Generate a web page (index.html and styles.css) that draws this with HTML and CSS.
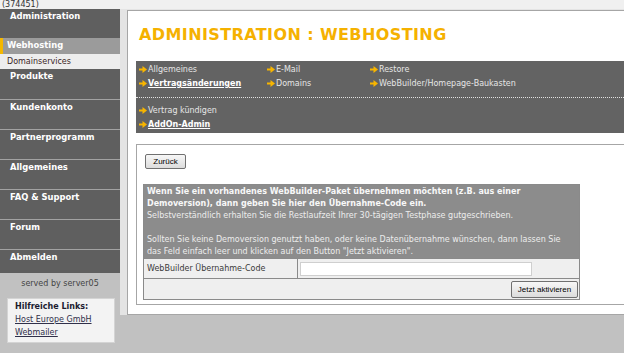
FILE: index.html
```html
<!DOCTYPE html>
<html lang="de">

<head>
    <meta charset="UTF-8">
    <title>Administration : Webhosting</title>
    <link rel="stylesheet" href="styles.css">
</head>

<body>
    <div class="topbar">(374451)</div>

    <div class="layout">
        <div class="side">
            <ul class="nav">
                <li class="nav-item first"><a href="#">Administration</a></li>
                <li class="nav-item active"><a href="#">Webhosting</a></li>
                <li class="nav-sub"><a href="#">Domainservices</a></li>
                <li class="nav-item plain"><a href="#">Produkte</a></li>
                <li class="nav-item"><a href="#">Kundenkonto</a></li>
                <li class="nav-item"><a href="#">Partnerprogramm</a></li>
                <li class="nav-item"><a href="#">Allgemeines</a></li>
                <li class="nav-item"><a href="#">FAQ &amp; Support</a></li>
                <li class="nav-item"><a href="#">Forum</a></li>
                <li class="nav-item last"><a href="#">Abmelden</a></li>
            </ul>
            <div class="served">served by server05</div>
            <div class="links">
                <b>Hilfreiche Links:</b>
                <a href="#">Host Europe GmbH</a>
                <a href="#">Webmailer</a>
            </div>
        </div>

        <div class="main">
            <div class="panel">
                <h1>ADMINISTRATION : WEBHOSTING</h1>

                <div class="submenu">
                    <div class="submenu-grid">
                        <a href="#"><i class="arrow"></i>Allgemeines</a>
                        <a href="#"><i class="arrow"></i>E-Mail</a>
                        <a href="#"><i class="arrow"></i>Restore</a>
                        <a href="#" class="current"><i class="arrow"></i>Vertragsänderungen</a>
                        <a href="#"><i class="arrow"></i>Domains</a>
                        <a href="#"><i class="arrow"></i>WebBuilder/Homepage-Baukasten</a>
                    </div>
                    <div class="submenu-grid sep">
                        <a href="#"><i class="arrow"></i>Vertrag kündigen</a>
                        <span></span>
                        <span></span>
                        <a href="#" class="current"><i class="arrow"></i>AddOn-Admin</a>
                    </div>
                </div>

                <div class="formbox">
                    <button type="button" class="btn btn-back">Zurück</button>
                    <table class="code-table">
                        <tr>
                            <td colspan="2" class="info">
                                <b>Wenn Sie ein vorhandenes WebBuilder-Paket übernehmen möchten (z.B. aus einer<br>
                                Demoversion), dann geben Sie hier den Übernahme-Code ein.</b><br>
                                Selbstverständlich erhalten Sie die Restlaufzeit Ihrer 30-tägigen Testphase gutgeschrieben.<br>
                                <br>
                                Sollten Sie keine Demoversion genutzt haben, oder keine Datenübernahme wünschen, dann lassen Sie<br>
                                das Feld einfach leer und klicken auf den Button "Jetzt aktivieren".
                            </td>
                        </tr>
                        <tr>
                            <td class="label">WebBuilder Übernahme-Code</td>
                            <td class="field"><input type="text" name="code"></td>
                        </tr>
                        <tr>
                            <td colspan="2" class="actions">
                                <button type="button" class="btn btn-submit">Jetzt aktivieren</button>
                            </td>
                        </tr>
                    </table>
                </div>
            </div>
        </div>
    </div>
</body>

</html>
```

FILE: styles.css
```css
body {
    margin: 0;
    background-color: #c1c1c1;
    font-family: "DejaVu Sans", Verdana, sans-serif;
    font-size: 8px;
    color: #333;
    overflow: hidden;
}

.topbar {
    height: 9px;
    line-height: 9px;
    padding-left: 2px;
    background-color: #f0f0f0;
    color: #333;
}

.layout {
    display: flex;
    align-items: flex-start;
}

/* left column */

.side {
    width: 120px;
    flex-shrink: 0;
}

.nav {
    list-style: none;
    margin: 0;
    padding: 0;
    background-color: #5f5f5f;
}

.nav-item {
    box-sizing: border-box;
    height: 30px;
    border-top: 1px solid #a2a2a2;
}

.nav-item a {
    display: block;
    padding: 2px 0 0 10px;
    color: #fff;
    font-weight: bold;
    font-size: 8.4px;
    line-height: 11px;
    text-decoration: none;
}

.nav-item.first {
    height: 29px;
    border-top: none;
}

.nav-item.plain {
    border-top: none;
}

.nav-item.last {
    height: 24px;
}

.nav-item.active {
    height: 16px;
    border-top: none;
    border-left: 3px solid #f5b800;
    background-color: #9b9b9b;
}

.nav-item.active a {
    padding: 2px 0 0 4px;
}

.nav-sub {
    height: 15px;
    background-color: #ededed;
}

.nav-sub a {
    display: block;
    padding: 2px 0 0 7px;
    line-height: 11px;
    color: #3b2626;
    text-decoration: none;
}

.served {
    margin-top: 5px;
    line-height: 12px;
    text-align: center;
    color: #444;
}

.links {
    margin: 8px 5px 0 7px;
    padding: 1px 7px 3px;
    border: 1px solid #d4d4d4;
    background-color: #f3f3f3;
    line-height: 13px;
}

.links b {
    display: block;
    color: #1c1c30;
}

.links a {
    display: block;
    width: max-content;
    color: #30304a;
}

/* content */

.main {
    flex: 1;
    padding: 1px 0 0 7px;
    background-color: #e4e4e4;
}

.panel {
    padding: 0 0 9px 8px;
    border-top: 1px solid #a6a6a6;
    border-left: 1px solid #a6a6a6;
    border-bottom: 1px solid #a6a6a6;
    background-color: #fff;
}

.panel h1 {
    margin: 15px 0 0 3px;
    font-size: 16px;
    letter-spacing: 0.4px;
    line-height: 18px;
    color: #f5b100;
}

.submenu {
    margin-top: 17px;
    padding: 2px 0 1px;
    background-color: #636363;
}

.submenu-grid {
    display: grid;
    grid-template-columns: 128px 103px auto;
    padding-left: 3px;
    line-height: 14px;
}

.submenu-grid.sep {
    margin-top: 6px;
    padding-top: 6px;
    border-top: 1px dotted #e2e2e2;
}

.submenu-grid a {
    color: #e6e6e6;
    text-decoration: none;
    white-space: nowrap;
}

.submenu-grid a.current {
    color: #fff;
    font-weight: bold;
    text-decoration: underline;
}

.arrow {
    display: inline-block;
    width: 8px;
    height: 7px;
    margin-right: 1px;
    vertical-align: -1px;
    background: url("data:image/svg+xml,%3Csvg xmlns='http://www.w3.org/2000/svg' width='8' height='7'%3E%3Cpath d='M0 2.5h4.5v2H0z M3.5 0L8 3.5 3.5 7z' fill='%23f7b500'/%3E%3C/svg%3E") no-repeat;
}

.formbox {
    margin-top: 11px;
    padding: 9px 0 4px 6px;
    border: 1px solid #a6a6a6;
    border-right: none;
}

.btn {
    padding: 0;
    border: 1px solid #707070;
    border-radius: 2px;
    background: linear-gradient(#f7f7f7, #dcdcdc);
    font-family: "Liberation Sans", Arial, sans-serif;
    font-size: 8px;
    color: #000;
    cursor: pointer;
}

.btn-back {
    display: block;
    width: 41px;
    height: 15px;
    margin-left: 2px;
}

.btn-submit {
    width: 67px;
    height: 17px;
}

.code-table {
    margin-top: 15px;
    width: 437px;
    border-collapse: collapse;
    border: 1px solid #7a7a7a;
}

.code-table td {
    padding: 0;
    border: 1px solid #8a8a8a;
    background-color: #efefef;
}

.code-table td.info {
    padding: 1px 3px 0;
    background-color: #8c8c8c;
    color: #ececec;
    line-height: 12px;
    white-space: nowrap;
}

.code-table td.info b {
    color: #f8f8f8;
}

.code-table td.label {
    width: 147px;
    height: 19px;
    padding: 0 3px;
    color: #3a3a3a;
}

.code-table td.field {
    padding: 0 2px;
}

.code-table input {
    display: block;
    box-sizing: border-box;
    width: 232px;
    height: 14px;
    padding: 0;
    border: 1px solid #cfcfcf;
    background-color: #fff;
}

.code-table td.actions {
    height: 20px;
    padding: 0 1px 0 0;
    text-align: right;
}

.code-table td.actions .btn {
    vertical-align: middle;
}
```
